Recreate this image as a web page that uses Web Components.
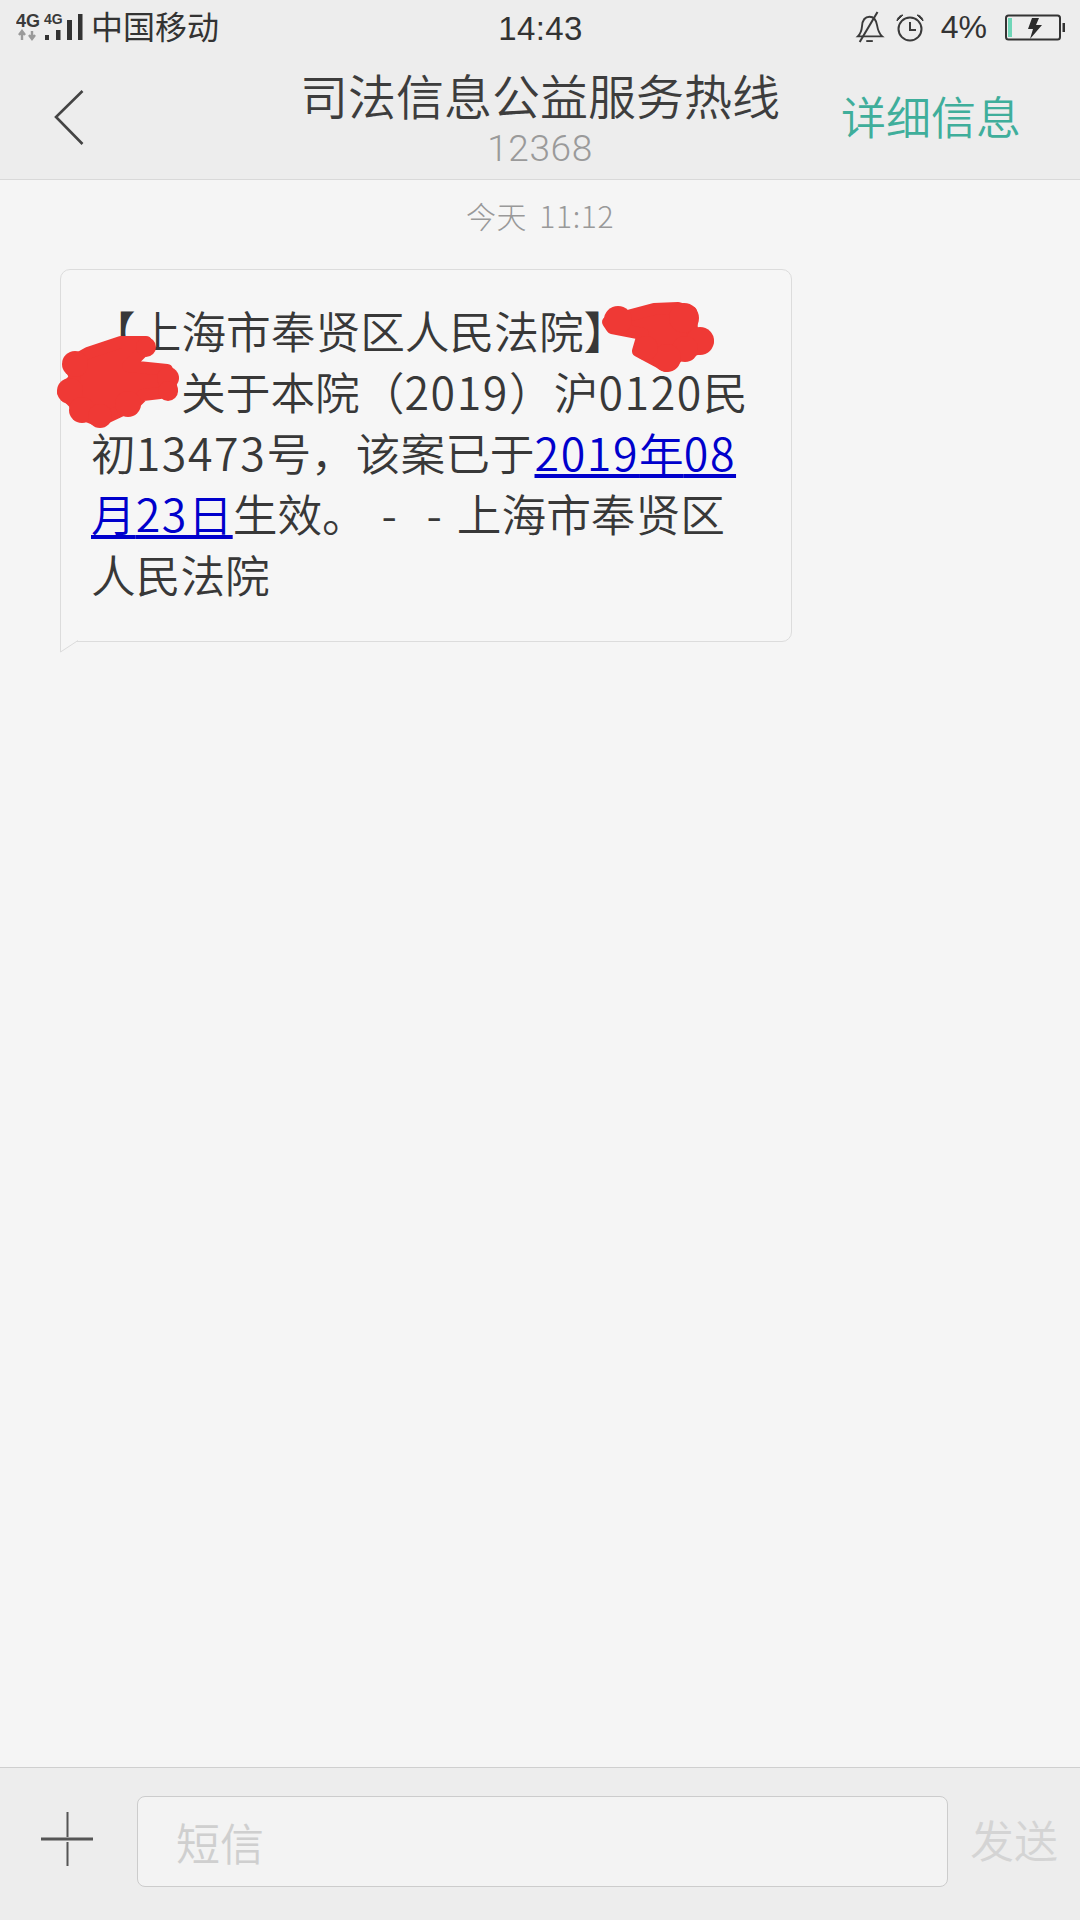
<!DOCTYPE html>
<html lang="zh-CN"><head><meta charset="utf-8"><title>短信</title>
<style>
html,body{margin:0;padding:0;background:#f5f5f5}
body{width:1080px;height:1920px;overflow:hidden;font-family:"Noto Sans CJK SC","Noto Sans",sans-serif}
sms-app{height:1920px}
.d{letter-spacing:1.6px}
.dash{display:inline-block;width:45px;text-align:center}
</style></head><body>
<sms-app>
  <status-bar slot="top"></status-bar>
  <nav-header slot="top" name="司法信息公益服务热线" number="12368" action="详细信息"></nav-header>
  <time-stamp>今天 11:12</time-stamp>
  <message-bubble>
    <span>【<span style="margin-left:1px">上海市奉贤区人民法院</span>】</span><br>
    <span style="display:inline-block;width:90px"></span>关于本院（<span class="d">2019</span>）沪<span class="d">0120</span>民<br>
    初<span class="d">13473</span>号，该案已于<a href="#"><span class="d">2019</span>年<span class="d">08</span></a><br>
    <a href="#">月<span class="d">23</span>日</a>生效。<span class="dash">-</span><span class="dash">-</span>上海市奉贤区<br>
    人民法院
  </message-bubble>
  <compose-bar slot="bottom" placeholder="短信" send="发送"></compose-bar>
</sms-app>
<script>
const FONT='"Noto Sans CJK SC","Noto Sans",sans-serif';
function def(name,html){
  customElements.define(name,class extends HTMLElement{
    connectedCallback(){
      if(this.shadowRoot)return;
      const r=this.attachShadow({mode:'open'});
      r.innerHTML=typeof html==='function'?html(this):html;
    }
  });
}
def('sms-app',`<style>
:host{display:flex;flex-direction:column;width:1080px;background:#f5f5f5}
main{flex:1;display:flex;flex-direction:column;min-height:0}
</style><slot name="top"></slot><main><slot></slot></main><slot name="bottom"></slot>`);

def('status-bar',`<style>
:host{display:flex;align-items:flex-start;height:50px;background:#ededed;color:#2b2b2b;font-family:${FONT}}
.left,.right{flex:1;display:flex;align-items:center;height:50px}
.left{padding-left:16px}
.right{justify-content:flex-end;padding-right:15px}
.time{font:33px/58px "Liberation Sans",sans-serif;color:#333;letter-spacing:.4px;height:50px}
.net{display:flex;width:76px;height:50px;flex:none}
.carrier{font-size:32px;line-height:50px;color:#333;margin-left:-1px}
.pct{font:32px/54px "Liberation Sans",sans-serif;color:#333;margin:0 18px 0 17px;height:50px}
svg{display:block;flex:none}
.bell{margin:4px 11px 0 0}.clock{margin-top:5px}.batt{margin-top:5px}
text{font-family:"Liberation Sans",sans-serif;font-weight:700}
</style>
<div class="left">
<svg class="net" width="76" height="50" viewBox="0 0 76 50">
<text x="0" y="27" font-size="18" fill="#3a3a3a">4G</text>
<text x="28" y="24" font-size="14" fill="#3a3a3a">4G</text>
<path d="M5 40v-6M2 35l3-4 3 4M15 31v6M12 35l3 4 3-4" transform="translate(1 0)" fill="none" stroke="#9a9a9a" stroke-width="2.4"/>
<path d="M29 35h4v5h-4zM40 30h4.500v10h-4.500zM51 20h5v20h-5zM62 14h4.500v26h-4.500z" fill="#333"/>
</svg>
<span class="carrier">中国移动</span>
</div>
<span class="time">14:43</span>
<div class="right">
<svg class="bell" width="30" height="32" viewBox="0 0 32 34" fill="none" stroke="#3a3a3a" stroke-width="2">
<path d="M3 27c3-3 4-5 4.500-11C8 9 11 6 15.500 6s7 3 8 9c1 6 2 9 5.500 12z"/>
<path d="M24 1 5 33" stroke-width="2.200"/><path d="M12 32h7" stroke-width="2"/>
</svg>
<svg class="clock" width="28" height="28" viewBox="0 0 28 28" fill="none" stroke="#3a3a3a" stroke-width="2">
<circle cx="14" cy="15" r="11.500"/><path d="M14 8v8h6"/>
<path d="M1 7c0-3 3-6 6-6zM27 7c0-3-3-6-6-6z" fill="#3a3a3a" stroke-width="1"/>
</svg>
<span class="pct">4%</span>
<svg class="batt" width="60" height="28" viewBox="0 0 60 28">
<rect x="1" y="1.500" width="54" height="24" rx="2.500" fill="none" stroke="#333" stroke-width="2"/>
<rect x="3" y="4" width="4" height="19" fill="#6fd6b8"/>
<path d="M59 9v9" stroke="#333" stroke-width="3"/>
<path d="M27 4h7l-3 7h6L25 25l3-10h-5z" fill="#2b2b2b"/>
</svg>
</div>`);

def('nav-header',el=>`<style>
:host{display:grid;grid-template-columns:1fr auto 1fr;height:129px;background:#ededed;border-bottom:1px solid #d9d9d9;font-family:${FONT};align-items:start}
.back{padding:40px 0 0 54px}
.back svg{display:block}
.mid{text-align:center;padding-top:12px}
.t{font-size:48px;font-weight:350;line-height:64px;color:#3d3d3d;white-space:nowrap}
.n{font:37px/44px "Roboto",sans-serif;color:#9a9a9a;font-weight:300;letter-spacing:.6px;margin-top:1px}
.a{justify-self:end;padding:31px 59px 0 0;font-size:45px;font-weight:350;line-height:70px;color:#3fae9b;white-space:nowrap}
</style>
<div class="back"><svg width="32" height="56" viewBox="0 0 32 56" fill="none" stroke="#444" stroke-width="2.600"><path d="M28.500 1 2 27l26.500 27"/></svg></div>
<div class="mid"><div class="t">${el.getAttribute('name')}</div><div class="n">${el.getAttribute('number')}</div></div>
<div class="a">${el.getAttribute('action')}</div>`);

def('time-stamp',`<style>
:host{display:block;text-align:center;font:300 30px/44px ${FONT};color:#999;padding-top:13px;word-spacing:5px;letter-spacing:.6px;height:44px}
</style><slot></slot>`);

def('message-bubble',`<style>
:host{display:block;position:relative;box-sizing:border-box;width:732px;height:373px;margin:32px 0 0 60px;
 padding:29px 20px 0 30px;background:#f6f6f6;border:1px solid #dcdcdc;border-radius:10px 10px 10px 0;
 font:350 44.7px/61px ${FONT};color:#383838;white-space:nowrap}
::slotted(a){color:#0000cc;text-decoration:underline}
svg{position:absolute;overflow:visible;pointer-events:none}
.tail{left:-1px;bottom:-12px}
.red{left:-1px;top:-1px}
</style><slot></slot>
<svg class="tail" width="22" height="13" viewBox="0 0 22 13"><path d="M.5 0v12L18 .5h3V0z" fill="#f6f6f6" stroke="none"/><path d="M.5 0v12L18 .5" fill="none" stroke="#dcdcdc"/></svg>
<svg class="red" width="732" height="373" viewBox="60 269 732 373">
<g fill="#ef3935" stroke="#ef3935" stroke-width="12" stroke-linejoin="round">
<path d="M608 322 624 317 654 309 678 308 691 312 692 331 708 341 700 348 681 354 666 366 651 358 638 351 643 334 612 328z"/>
<path d="M147 345 141 353 128 366 167 370 172 390 160 393 143 395 133 405 99 421 79 413 74 403 63 392 75 378 70 363 88 353 121 342 146 342z"/>
</g>
<g fill="#ef3935">
<circle cx="684" cy="318" r="15"/><circle cx="700" cy="341" r="14"/><circle cx="685" cy="349" r="13"/><circle cx="667" cy="358" r="14"/><circle cx="646" cy="348" r="12"/><circle cx="618" cy="320" r="14"/>
<circle cx="146" cy="347" r="10"/><circle cx="168" cy="378" r="11"/><circle cx="168" cy="391" r="10"/><circle cx="75" cy="364" r="13"/><circle cx="70" cy="391" r="13"/><circle cx="82" cy="410" r="13"/><circle cx="100" cy="416" r="12"/><circle cx="128" cy="404" r="13"/>
</g></svg>`);

def('compose-bar',el=>`<style>
:host{display:flex;align-items:flex-start;box-sizing:border-box;height:153px;background:#ededed;border-top:1px solid #cfcfcf;font-family:${FONT}}
.plus{width:137px;height:150px;flex:none}
.plus svg{display:block;margin:44px 0 0 41px}
.box{box-sizing:border-box;flex:none;width:811px;height:91px;margin-top:28px;background:#f3f3f3;border:1.500px solid #cccccc;border-radius:8px;padding-left:38px;font-size:44px;font-weight:350;line-height:90px;color:#cfcfcf}
.send{font-size:44px;font-weight:350;line-height:60px;color:#d4d4d4;margin:41px 0 0 22px;white-space:nowrap}
</style>
<div class="plus"><svg width="52" height="54" viewBox="0 0 52 54" fill="none" stroke="#555"><path d="M26.500 0v25M26.500 30v24" stroke-width="2"/><path d="M0 27h52" stroke-width="3"/></svg></div>
<div class="box">${el.getAttribute('placeholder')}</div>
<div class="send">${el.getAttribute('send')}</div>`);
</script>
</body></html>
